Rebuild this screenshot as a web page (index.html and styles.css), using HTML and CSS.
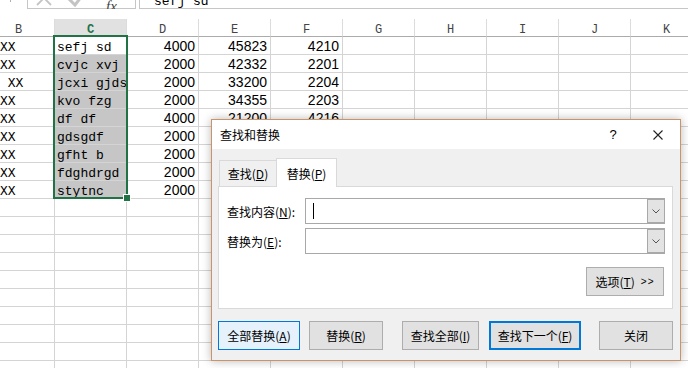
FILE: index.html
```html
<!DOCTYPE html>
<html>
<head>
    <meta charset="utf-8">
    <title>查找和替换</title>
    <link rel="stylesheet" href="styles.css">
</head>
<body>
    <div class="formula-bar">
        <span class="fb-grip"></span>
        <div class="fb-buttons">
            <svg width="72" height="8" viewBox="0 0 72 8">
                <path d="M9 -9 L23 5 M23 -9 L9 5" stroke="#c4c4c4" stroke-width="1.8" fill="none"/>
                <path d="M38 -4 L47 5 L57 -8" stroke="#c4c4c4" stroke-width="3" fill="none"/>
            </svg>
            <span class="fx">fx</span>
        </div>
        <div class="fb-input"><span>sefj sd</span></div>
    </div>

    <div class="sheet">
        <div class="row head">
            <div>B</div><div class="sel">C</div><div>D</div><div>E</div><div>F</div>
            <div>G</div><div>H</div><div>I</div><div>J</div><div>K</div>
        </div>
        <div class="row">
            <div class="b">XX</div><div class="t">sefj sd</div><div class="n">4000</div><div class="n">45823</div><div class="n">4210</div>
            <div></div><div></div><div></div><div></div><div></div>
        </div>
        <div class="row">
            <div class="b">XX</div><div class="t hl">cvjc xvj</div><div class="n">2000</div><div class="n">42332</div><div class="n">2201</div>
            <div></div><div></div><div></div><div></div><div></div>
        </div>
        <div class="row">
            <div class="b">&nbsp;XX</div><div class="t hl">jcxi gjds</div><div class="n">2000</div><div class="n">33200</div><div class="n">2204</div>
            <div></div><div></div><div></div><div></div><div></div>
        </div>
        <div class="row">
            <div class="b">XX</div><div class="t hl">kvo fzg</div><div class="n">2000</div><div class="n">34355</div><div class="n">2203</div>
            <div></div><div></div><div></div><div></div><div></div>
        </div>
        <div class="row">
            <div class="b">XX</div><div class="t hl">df df</div><div class="n">4000</div><div class="n">21200</div><div class="n">4216</div>
            <div></div><div></div><div></div><div></div><div></div>
        </div>
        <div class="row">
            <div class="b">XX</div><div class="t hl">gdsgdf</div><div class="n">2000</div><div class="n">32100</div><div class="n">2206</div>
            <div></div><div></div><div></div><div></div><div></div>
        </div>
        <div class="row">
            <div class="b">XX</div><div class="t hl">gfht b</div><div class="n">2000</div><div class="n">31200</div><div class="n">2207</div>
            <div></div><div></div><div></div><div></div><div></div>
        </div>
        <div class="row">
            <div class="b">XX</div><div class="t hl">fdghdrgd</div><div class="n">2000</div><div class="n">36500</div><div class="n">2208</div>
            <div></div><div></div><div></div><div></div><div></div>
        </div>
        <div class="row">
            <div class="b">XX</div><div class="t hl">stytnc</div><div class="n">2000</div><div class="n">38400</div><div class="n">2209</div>
            <div></div><div></div><div></div><div></div><div></div>
        </div>
        <div class="row"><div></div><div></div><div></div><div></div><div></div><div></div><div></div><div></div><div></div><div></div></div>
        <div class="row"><div></div><div></div><div></div><div></div><div></div><div></div><div></div><div></div><div></div><div></div></div>
        <div class="row"><div></div><div></div><div></div><div></div><div></div><div></div><div></div><div></div><div></div><div></div></div>
        <div class="row"><div></div><div></div><div></div><div></div><div></div><div></div><div></div><div></div><div></div><div></div></div>
        <div class="row"><div></div><div></div><div></div><div></div><div></div><div></div><div></div><div></div><div></div><div></div></div>
        <div class="row"><div></div><div></div><div></div><div></div><div></div><div></div><div></div><div></div><div></div><div></div></div>
        <div class="row"><div></div><div></div><div></div><div></div><div></div><div></div><div></div><div></div><div></div><div></div></div>
        <div class="row"><div></div><div></div><div></div><div></div><div></div><div></div><div></div><div></div><div></div><div></div></div>
        <div class="row"><div></div><div></div><div></div><div></div><div></div><div></div><div></div><div></div><div></div><div></div></div>
        <div class="row"><div></div><div></div><div></div><div></div><div></div><div></div><div></div><div></div><div></div><div></div></div>

        <div class="selection"></div>
        <div class="fill-handle"></div>
    </div>

    <div class="dialog">
        <div class="dlg-title">
            <span class="dlg-caption">查找和替换</span>
            <span class="dlg-help">?</span>
            <span class="dlg-close">
                <svg width="10" height="10" viewBox="0 0 10 10">
                    <path d="M0.5 0.5 L9.5 9.5 M9.5 0.5 L0.5 9.5" stroke="#222" stroke-width="1.1" fill="none"/>
                </svg>
            </span>
        </div>
        <div class="dlg-body">
            <div class="tabs">
                <div class="tab">查找(<u>D</u>)</div>
                <div class="tab active">替换(<u>P</u>)</div>
            </div>
            <div class="panel">
                <div class="field">
                    <div class="label">查找内容(<u>N</u>):</div>
                    <div class="combo">
                        <span class="caret"></span>
                        <span class="drop">
                            <svg width="8" height="5" viewBox="0 0 8 5"><path d="M0.5 0.5 L4 4 L7.5 0.5" stroke="#555" stroke-width="1" fill="none"/></svg>
                        </span>
                    </div>
                </div>
                <div class="field">
                    <div class="label">替换为(<u>E</u>):</div>
                    <div class="combo">
                        <span class="drop">
                            <svg width="8" height="5" viewBox="0 0 8 5"><path d="M0.5 0.5 L4 4 L7.5 0.5" stroke="#555" stroke-width="1" fill="none"/></svg>
                        </span>
                    </div>
                </div>
                <div class="options">
                    <div class="btn btn-options">选项(<u>T</u>) <span class="arrows">&gt;&gt;</span></div>
                </div>
            </div>
            <div class="actions">
                <div class="btn btn-replace-all">全部替换(<u>A</u>)</div>
                <div class="btn btn-replace">替换(<u>R</u>)</div>
                <div class="btn btn-find-all">查找全部(<u>I</u>)</div>
                <div class="btn btn-find-next">查找下一个(<u>F</u>)</div>
                <div class="btn btn-close">关闭</div>
            </div>
        </div>
    </div>
</body>
</html>
```

FILE: styles.css
```css
html {
    height: 100%;
}

body {
    margin: 0;
    padding: 0;
    height: 100%;
    overflow: hidden;
    background: #ffffff;
    font-family: "Liberation Mono", monospace;
    font-size: 13px;
    color: #000000;
}

/* formula bar, only its lower edge is in view */
.formula-bar {
    display: flex;
    height: 9px;
    overflow: hidden;
}

.fb-grip {
    width: 1px;
    height: 2px;
    margin-left: 10px;
    background: #b0b0b0;
}

.fb-buttons {
    display: flex;
    align-items: flex-end;
    box-sizing: border-box;
    width: 109px;
    height: 9px;
    margin-left: 16px;
    border: 1px solid #c6c6c6;
    border-top: none;
}

.fb-buttons svg {
    display: block;
}

.fx {
    margin-left: 6px;
    margin-bottom: -6px;
    font-family: "Liberation Serif", serif;
    font-style: italic;
    font-size: 15px;
    line-height: 16px;
    color: #444444;
}

.fb-input {
    display: flex;
    align-items: flex-end;
    flex: 1;
    box-sizing: border-box;
    height: 9px;
    margin-left: 3px;
    padding-left: 14px;
    border-left: 1px solid #c6c6c6;
    border-bottom: 1px solid #c6c6c6;
}

.fb-input span {
    line-height: 20px;
    margin-bottom: -4px;
}

/* sheet */
.sheet {
    position: relative;
    margin: 10px 0 0 -17px;
    width: 720px;
}

.row {
    display: grid;
    grid-template-columns: repeat(10, 72px);
}

.row > div {
    box-sizing: border-box;
    height: 18px;
    border-right: 1px solid #d4d4d4;
    border-bottom: 1px solid #d4d4d4;
    overflow: hidden;
    white-space: nowrap;
    line-height: 21px;
    padding-left: 2px;
}

.row.head > div {
    border-right-color: #dcdcdc;
    border-bottom-color: #ababab;
    text-align: center;
    font-size: 12px;
    line-height: 22px;
    color: #444444;
    padding-left: 0;
}

.row.head > .sel {
    background: #e1e1e1;
    color: #217346;
    font-weight: bold;
}

.row > .b {
    padding-left: 17px;
}

.row > .hl {
    background: #c6c6c6;
}

.row > .n {
    font-family: "Liberation Sans", sans-serif;
    font-size: 14px;
    line-height: 19px;
    text-align: right;
    padding-left: 0;
    padding-right: 3px;
}

.selection {
    position: absolute;
    left: 70px;
    top: 16px;
    width: 75px;
    height: 164px;
    box-sizing: border-box;
    border: 2px solid #217346;
}

.fill-handle {
    position: absolute;
    left: 140px;
    top: 175px;
    width: 6px;
    height: 6px;
    background: #217346;
    border: 1px solid #ffffff;
}

/* find and replace dialog */
.dialog {
    position: absolute;
    left: 211px;
    top: 119px;
    width: 470px;
    height: 242px;
    box-sizing: border-box;
    border: 1px solid #c9946a;
    background: #f0f0f0;
    box-shadow: 0 0 9px rgba(0, 0, 0, 0.28);
    display: flex;
    flex-direction: column;
    font-family: "Noto Sans CJK SC", "Noto Sans", sans-serif;
    font-size: 12px;
    color: #000000;
}

.dlg-title {
    display: flex;
    align-items: center;
    height: 29px;
    padding-left: 8px;
    background: #ffffff;
}

.dlg-caption {
    flex: 1;
}

.dlg-help {
    width: 20px;
    text-align: center;
    font-family: "Liberation Sans", sans-serif;
    font-size: 13px;
    margin-right: 20px;
}

.dlg-close {
    display: flex;
    justify-content: center;
    width: 30px;
    margin-right: 7px;
}

.dlg-body {
    flex: 1;
    padding: 9px 7px 10px 6px;
}

.tabs {
    display: flex;
    align-items: flex-end;
    height: 28px;
}

.tab {
    box-sizing: border-box;
    display: flex;
    align-items: center;
    justify-content: center;
    width: 57px;
    height: 26px;
    margin-left: 1px;
    border: 1px solid #d9d9d9;
    border-right: none;
    border-bottom: none;
}

.tab.active {
    position: relative;
    width: 61px;
    height: 29px;
    margin-left: 0;
    margin-bottom: -1px;
    border-right: 1px solid #d9d9d9;
    background: #ffffff;
    z-index: 1;
}

.panel {
    box-sizing: border-box;
    height: 123px;
    padding: 11px 7px 12px 8px;
    border: 1px solid #d9d9d9;
    background: #ffffff;
}

.field {
    display: flex;
    align-items: center;
    height: 26px;
    margin-bottom: 4px;
}

.label {
    width: 78px;
}

.combo {
    flex: 1;
    display: flex;
    align-items: center;
    box-sizing: border-box;
    height: 26px;
    border: 1px solid #a8a8a8;
    background: #ffffff;
}

.caret {
    width: 1px;
    height: 16px;
    margin-left: 7px;
    background: #000000;
}

.drop {
    display: flex;
    align-items: center;
    justify-content: center;
    box-sizing: border-box;
    width: 17px;
    height: 24px;
    margin-left: auto;
    border: 1px solid #a8a8a8;
    border-right-width: 0;
    background: #e3e3e3;
}

.options {
    display: flex;
    justify-content: flex-end;
    margin-top: 13px;
    padding-right: 1px;
}

.btn {
    box-sizing: border-box;
    display: flex;
    align-items: center;
    justify-content: center;
    height: 29px;
    border: 1px solid #adadad;
    background: #e1e1e1;
}

.btn-options {
    width: 78px;
}

.arrows {
    margin-left: 6px;
    font-family: "Liberation Sans", sans-serif;
    font-size: 10px;
    letter-spacing: 1px;
}

.actions {
    display: flex;
    margin-top: 12px;
}

.btn-replace-all {
    width: 82px;
    border-color: #0078d7;
    background: #e5f1fb;
}

.btn-replace {
    width: 74px;
    margin-left: 9px;
}

.btn-find-all {
    width: 77px;
    margin-left: 19px;
}

.btn-find-next {
    width: 92px;
    margin-left: 10px;
    border: 2px solid #0078d7;
}

.btn-close {
    width: 74px;
    margin-left: 18px;
}
```
